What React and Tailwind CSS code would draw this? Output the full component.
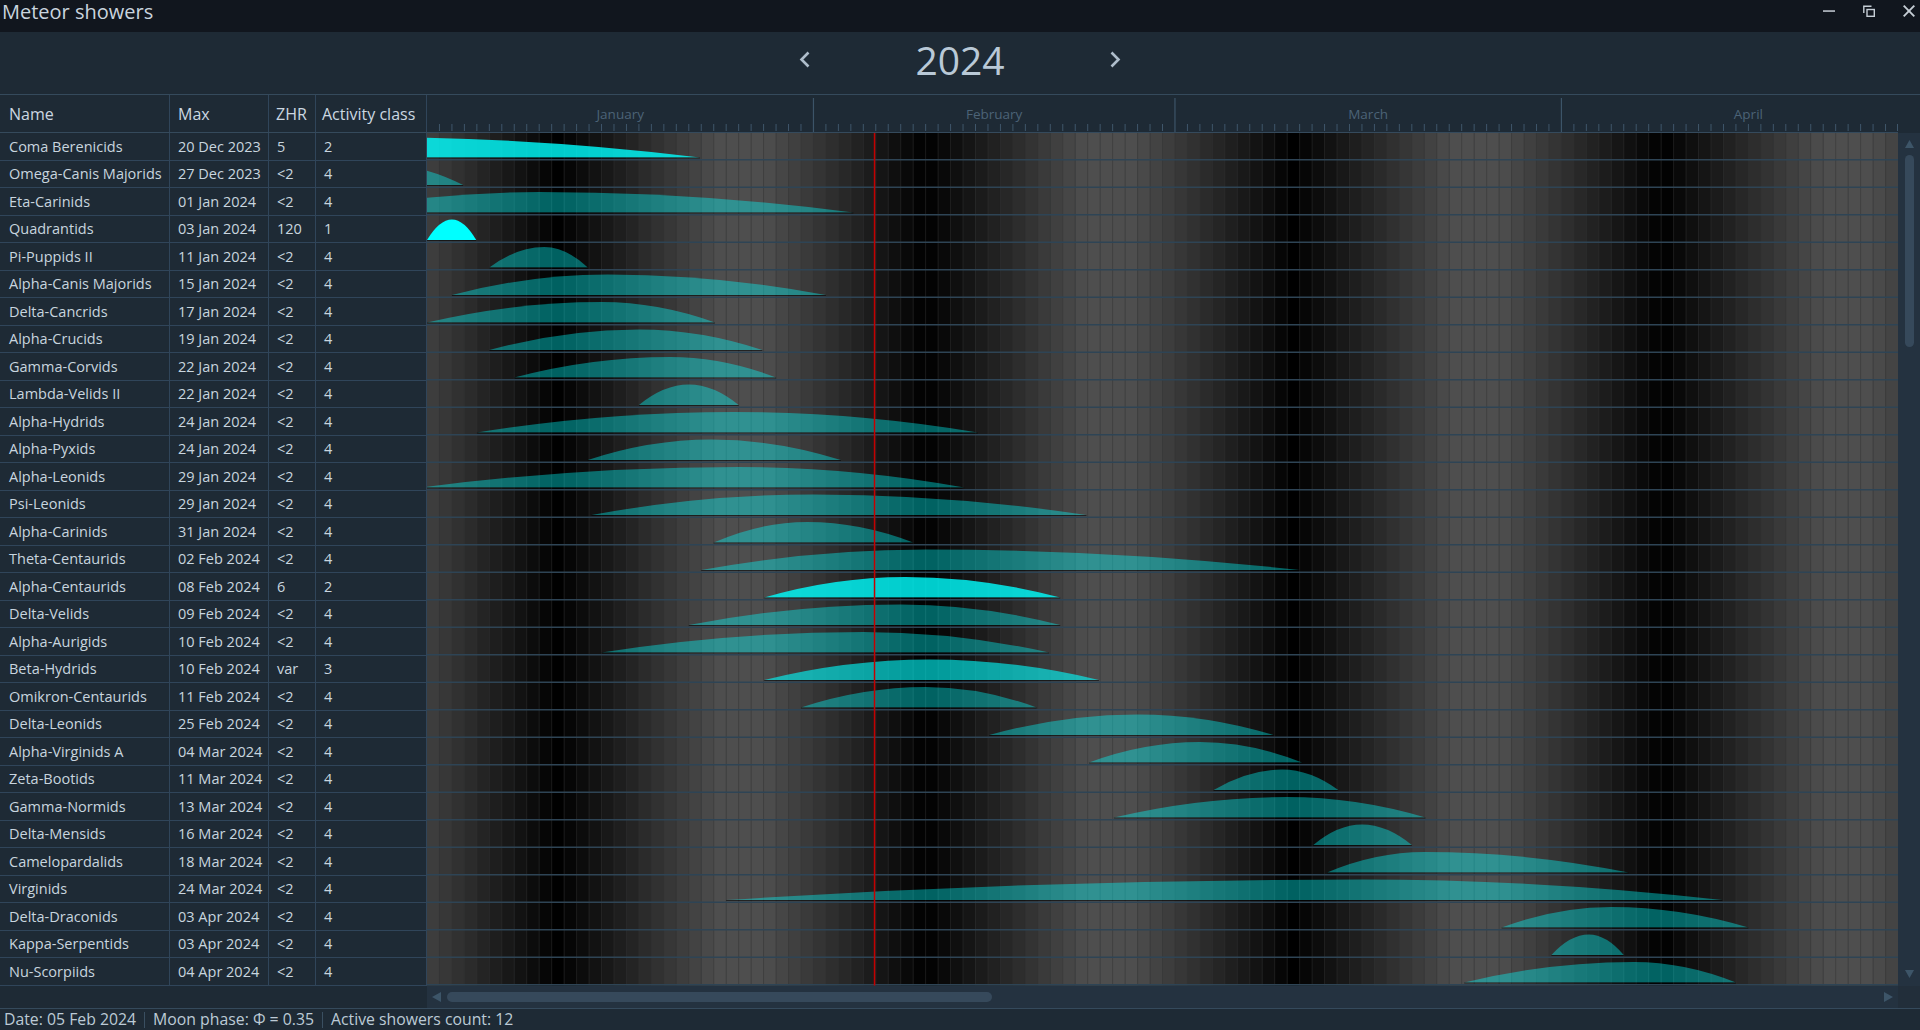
import React from "react";

const DAYS = 118;
const CHART_W = 1471;
const DAY_W = CHART_W / DAYS;
const ROW_H = 27.5;
const SHAPE_H = 20.5;
const BODY_H = ROW_H * 31;

const MONTHS = [
  { name: "January", start: 0, len: 31 },
  { name: "February", start: 31, len: 29 },
  { name: "March", start: 60, len: 31 },
  { name: "April", start: 91, len: 30 },
];

// name, max, zhr, class, start / peak / end (days from 1 Jan)
const SHOWERS = [
  ["Coma Berenicids", "20 Dec 2023", "5", 2, -40, -5, 21.9],
  ["Omega-Canis Majorids", "27 Dec 2023", "<2", 4, -12, -3.5, 2.9],
  ["Eta-Carinids", "01 Jan 2024", "<2", 4, -8, 9, 34.2],
  ["Quadrantids", "03 Jan 2024", "120", 1, 0, 2, 3.95],
  ["Pi-Puppids II", "11 Jan 2024", "<2", 4, 5, 9.4, 12.9],
  ["Alpha-Canis Majorids", "15 Jan 2024", "<2", 4, 2, 14.5, 32],
  ["Delta-Cancrids", "17 Jan 2024", "<2", 4, 0, 14, 23.1],
  ["Alpha-Crucids", "19 Jan 2024", "<2", 4, 5, 17, 26.9],
  ["Gamma-Corvids", "22 Jan 2024", "<2", 4, 7, 19.5, 28],
  ["Lambda-Velids II", "22 Jan 2024", "<2", 4, 17, 21, 25],
  ["Alpha-Hydrids", "24 Jan 2024", "<2", 4, 4, 24.6, 44.2],
  ["Alpha-Pyxids", "24 Jan 2024", "<2", 4, 12.9, 22.8, 33.2],
  ["Alpha-Leonids", "29 Jan 2024", "<2", 4, -0.5, 25, 43.1],
  ["Psi-Leonids", "29 Jan 2024", "<2", 4, 13.2, 31, 52.9],
  ["Alpha-Carinids", "31 Jan 2024", "<2", 4, 23, 30.5, 39],
  ["Theta-Centaurids", "02 Feb 2024", "<2", 4, 22, 40, 70],
  ["Alpha-Centaurids", "08 Feb 2024", "6", 2, 27.05, 38.4, 50.8],
  ["Delta-Velids", "09 Feb 2024", "<2", 4, 21, 38, 50.8],
  ["Alpha-Aurigids", "10 Feb 2024", "<2", 4, 14, 35, 49.9],
  ["Beta-Hydrids", "10 Feb 2024", "var", 3, 27.05, 40.3, 53.9],
  ["Omikron-Centaurids", "11 Feb 2024", "<2", 4, 30, 40, 48.9],
  ["Delta-Leonids", "25 Feb 2024", "<2", 4, 45.1, 57, 67.9],
  ["Alpha-Virginids A", "04 Mar 2024", "<2", 4, 53.1, 62, 70.2],
  ["Zeta-Bootids", "11 Mar 2024", "<2", 4, 63.1, 68.6, 73.1],
  ["Gamma-Normids", "13 Mar 2024", "<2", 4, 55.1, 69, 80.1],
  ["Delta-Mensids", "16 Mar 2024", "<2", 4, 71.1, 75, 79],
  ["Camelopardalids", "18 Mar 2024", "<2", 4, 72.2, 80, 96.4],
  ["Virginids", "24 Mar 2024", "<2", 4, 24, 75, 103.9],
  ["Delta-Draconids", "03 Apr 2024", "<2", 4, 86.2, 95, 106],
  ["Kappa-Serpentids", "03 Apr 2024", "<2", 4, 90.2, 93.2, 96],
  ["Nu-Scorpiids", "04 Apr 2024", "<2", 4, 83.2, 96.8, 105],
];

const FILLS = {
  1: "#00ffff",
  2: "rgba(0,255,255,0.8)",
  3: "rgba(0,255,255,0.6)",
  4: "rgba(0,255,255,0.38)",
};

// sky brightness of one day column, from the moon age
function moonGray(d) {
  const syn = 29.5306;
  let age = (d + 0.5 - 10.498) % syn;
  if (age < 0) age += syn;
  const tri = 1 - Math.abs(age - syn / 2) / (syn / 2);
  const g = Math.round(78 * Math.min(1, tri * 1.15));
  return `rgb(${g},${g},${g})`;
}

function showerPath(s, p, e, top) {
  const base = top + ROW_H - 3;
  const peak = base - SHAPE_H;
  const x = (d) => (d * DAY_W).toFixed(2);
  return `M${x(s)},${base} Q${x(s + (p - s) / 2)},${peak} ${x(p)},${peak} Q${x(p + (e - p) / 2)},${peak} ${x(e)},${base} Z`;
}

function TitleBar() {
  return (
    <div className="h-[32px] bg-[#11161e] flex justify-between shrink-0">
      <div className="pl-[2px] pt-[1px] text-[20px] leading-[22px] text-[#c9d4de]">Meteor showers</div>
      <div className="flex items-start gap-[28px] pt-[5px] pr-[5px]">
        <svg width="12" height="12" viewBox="0 0 12 12">
          <rect x="0" y="5.3" width="12" height="1.5" fill="#c6ced6" />
        </svg>
        <svg width="12" height="12" viewBox="0 0 12 12" fill="none" stroke="#c6ced6" strokeWidth="1.4">
          <polyline points="8.5,1.2 0.8,1.2 0.8,8" />
          <rect x="4" y="4.5" width="7.3" height="6.8" />
        </svg>
        <svg width="12" height="12" viewBox="0 0 12 12" stroke="#c6ced6" strokeWidth="1.9">
          <line x1="0.7" y1="0.7" x2="11.3" y2="11.3" />
          <line x1="11.3" y1="0.7" x2="0.7" y2="11.3" />
        </svg>
      </div>
    </div>
  );
}

function YearBar() {
  return (
    <div className="h-[63px] shrink-0 border-b border-[#354a5c] flex items-center justify-center gap-[105px] pb-[7px]">
      <svg width="11" height="17" viewBox="0 0 11 17" fill="none" stroke="#aebdcb" strokeWidth="2.6">
        <polyline points="9.5,1.5 2.5,8.5 9.5,15.5" />
      </svg>
      <div className="text-[39px] leading-none text-[#b9c9d7]">2024</div>
      <svg width="11" height="17" viewBox="0 0 11 17" fill="none" stroke="#aebdcb" strokeWidth="2.6">
        <polyline points="1.5,1.5 8.5,8.5 1.5,15.5" />
      </svg>
    </div>
  );
}

function ShowerTable() {
  return (
    <div className="w-[427px] shrink-0 flex flex-col">
      <div className="h-[38px] flex border-b border-[#354a5c] text-[16px] text-[#cbd7e1]">
        <div className="w-[170px] border-r border-[#30455a] pl-[9px] flex items-center">Name</div>
        <div className="w-[99px] border-r border-[#30455a] pl-[8px] flex items-center">Max</div>
        <div className="w-[47px] border-r border-[#30455a] pl-[7px] flex items-center">ZHR</div>
        <div className="w-[111px] border-r border-[#30455a] pl-[6px] flex items-center whitespace-nowrap">Activity class</div>
      </div>
      {SHOWERS.map(([name, max, zhr, cls]) => (
        <div key={name} className="h-[27.5px] flex border-b border-[#30455a] text-[14.5px] text-[#c8d5df]">
          <div className="w-[170px] border-r border-[#30455a] pl-[9px] pt-[1px] flex items-center whitespace-nowrap">{name}</div>
          <div className="w-[99px] border-r border-[#30455a] pl-[8px] pt-[1px] flex items-center whitespace-nowrap">{max}</div>
          <div className="w-[47px] border-r border-[#30455a] pl-[8px] pt-[1px] flex items-center">{zhr}</div>
          <div className="w-[111px] border-r border-[#30455a] pl-[8px] pt-[1px] flex items-center">{cls}</div>
        </div>
      ))}
    </div>
  );
}

function ChartHeader() {
  const ticks = [];
  for (let d = 1; d <= DAYS; d++) {
    if (MONTHS.some((m) => m.start === d)) continue;
    const x = Math.min(d * DAY_W, CHART_W - 0.5);
    ticks.push(<line key={d} x1={x} x2={x} y1="29" y2="36" stroke="#3f566a" strokeWidth="1" />);
  }
  return (
    <div className="h-[38px] border-b border-[#354a5c]">
      <svg width={CHART_W} height="37" className="block">
        {MONTHS.map((m) => (
          <g key={m.name}>
            {m.start > 0 && (
              <line x1={m.start * DAY_W} x2={m.start * DAY_W} y1="3" y2="37" stroke="#3c5468" strokeWidth="1.2" />
            )}
            <text
              x={(m.start + m.len / 2) * DAY_W}
              y="23.5"
              textAnchor="middle"
              fontSize="13.5"
              fill="#4c6377"
              fontFamily="'Open Sans', sans-serif"
            >
              {m.name}
            </text>
          </g>
        ))}
        {ticks}
      </svg>
    </div>
  );
}

function ChartBody() {
  const cols = [];
  const lines = [];
  for (let d = 0; d < DAYS; d++) {
    cols.push(<rect key={d} x={d * DAY_W} y="0" width={DAY_W + 0.4} height={BODY_H} fill={moonGray(d)} />);
    if (d > 0)
      lines.push(
        <line key={d} x1={d * DAY_W} x2={d * DAY_W} y1="0" y2={BODY_H} stroke="#333333" strokeOpacity="0.5" strokeWidth="1" />
      );
  }
  const redX = 35.9 * DAY_W;
  return (
    <svg width={CHART_W} height={BODY_H} className="block">
      {cols}
      {lines}
      {SHOWERS.map(([name, , , cls, s, p, e], i) => {
        const top = i * ROW_H;
        const base = top + ROW_H - 3;
        const x0 = Math.max(0, s * DAY_W);
        return (
          <g key={name}>
            <path d={showerPath(s, p, e, top)} fill={FILLS[cls]} />
            <rect x={x0} y={base} width={e * DAY_W - x0} height="1" fill="rgba(0,0,0,0.55)" />
          </g>
        );
      })}
      {SHOWERS.map((_, i) => (
        <rect key={i} x="0" y={(i + 1) * ROW_H - 1.5} width={CHART_W} height="1.5" fill="#2e4455" />
      ))}
      <rect x={redX - 0.75} y="0" width="1.5" height={BODY_H} fill="#c40000" />
    </svg>
  );
}

function VScroll() {
  return (
    <div className="w-[22px] shrink-0 flex flex-col">
      <div className="h-[38px]" />
      <div className="h-[852.5px] bg-[#243240] flex flex-col items-center pt-[7px] pb-[8px]">
        <svg width="9" height="8" viewBox="0 0 9 8">
          <polygon points="4.5,0 9,8 0,8" fill="#3d5568" />
        </svg>
        <div className="mt-[7px] w-[9px] h-[192px] rounded-full bg-[#36495b]" />
        <div className="flex-1" />
        <svg width="9" height="8" viewBox="0 0 9 8">
          <polygon points="0,0 9,0 4.5,8" fill="#3d5568" />
        </svg>
      </div>
    </div>
  );
}

function HScroll() {
  return (
    <div className="h-[22.5px] shrink-0 flex">
      <div className="w-[427px]" />
      <div className="w-[1471px] bg-[#243240] flex items-center pl-[5px] pr-[5px]">
        <svg width="9" height="10" viewBox="0 0 9 10">
          <polygon points="0,5 9,0 9,10" fill="#3d5568" />
        </svg>
        <div className="ml-[6px] w-[545px] h-[10px] rounded-full bg-[#36495b]" />
        <div className="flex-1" />
        <svg width="9" height="10" viewBox="0 0 9 10">
          <polygon points="0,0 9,5 0,10" fill="#3d5568" />
        </svg>
      </div>
      <div className="flex-1 bg-[#222e3a]" />
    </div>
  );
}

function StatusBar() {
  return (
    <div className="h-[22px] shrink-0 border-t border-[#354a5c] flex items-center pl-[4px] gap-[8px] text-[15.8px] leading-none text-[#bccad6] whitespace-nowrap">
      <span>Date: 05 Feb 2024</span>
      <span className="w-px h-[16px] bg-[#3a4f61]" />
      <span>Moon phase: Φ = 0.35</span>
      <span className="w-px h-[16px] bg-[#3a4f61]" />
      <span>Active showers count: 12</span>
    </div>
  );
}

export default function App() {
  return (
    <div className="w-[1920px] h-[1030px] flex flex-col bg-[#1e2a35] font-['Open_Sans',sans-serif] overflow-hidden select-none">
      <TitleBar />
      <YearBar />
      <div className="h-[890.5px] shrink-0 flex">
        <ShowerTable />
        <div className="w-[1471px] shrink-0 flex flex-col overflow-hidden">
          <ChartHeader />
          <ChartBody />
        </div>
        <VScroll />
      </div>
      <HScroll />
      <StatusBar />
    </div>
  );
}
